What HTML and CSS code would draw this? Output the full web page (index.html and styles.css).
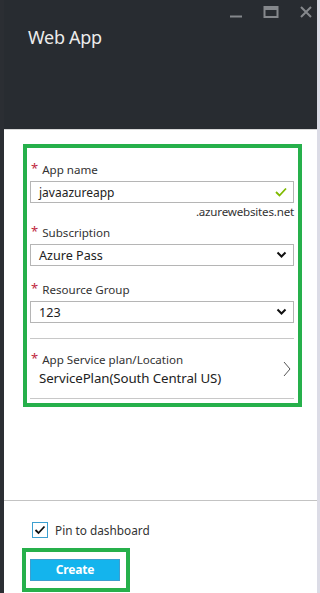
FILE: index.html
```html
<!DOCTYPE html>
<html>
<head>
<meta charset="utf-8">
<link rel="stylesheet" href="styles.css">
</head>
<body>
<div class="blade">
  <header class="head">
    <h1 class="title">Web App</h1>
    <div class="controls">
      <svg class="ctl" width="14" height="14" viewBox="0 0 14 14"><path d="M1 11.5h12" stroke="#85888c" stroke-width="2"/></svg>
      <svg class="ctl" width="16" height="14" viewBox="0 0 16 14"><rect x="1.5" y="2" width="13" height="10" fill="none" stroke="#85888c" stroke-width="2"/><path d="M1.5 4h13" stroke="#85888c" stroke-width="2"/></svg>
      <svg class="ctl" width="14" height="14" viewBox="0 0 14 14"><path d="M2 2l10 10M12 2L2 12" stroke="#85888c" stroke-width="2"/></svg>
    </div>
  </header>
  <main class="content">
    <section class="form-box">
      <label class="lbl"><span class="req">*</span>App name</label>
      <div class="field">
        <span>javaazureapp</span>
        <svg width="12" height="10" viewBox="0 0 12 10"><path d="M1 5l3.5 3.5L11 1.5" fill="none" stroke="#7fba00" stroke-width="1.8"/></svg>
      </div>
      <div class="suffix">.azurewebsites.net</div>
      <label class="lbl lbl-2"><span class="req">*</span>Subscription</label>
      <div class="field select">
        <span>Azure Pass</span>
        <svg width="11" height="8" viewBox="0 0 11 8"><path d="M1.5 1.5l4 4 4-4" fill="none" stroke="#111" stroke-width="2"/></svg>
      </div>
      <label class="lbl lbl-3"><span class="req">*</span>Resource Group</label>
      <div class="field select">
        <span>123</span>
        <svg width="11" height="8" viewBox="0 0 11 8"><path d="M1.5 1.5l4 4 4-4" fill="none" stroke="#111" stroke-width="2"/></svg>
      </div>
      <div class="plan">
        <div class="plan-text">
          <label class="lbl"><span class="req">*</span>App Service plan/Location</label>
          <div class="plan-val">ServicePlan(South Central US)</div>
        </div>
        <svg width="8" height="16" viewBox="0 0 8 16"><path d="M1 1l6 7-6 7" fill="none" stroke="#555" stroke-width="1"/></svg>
      </div>
    </section>
    <footer class="foot">
      <div class="pin">
        <span class="cb"><svg width="12" height="10" viewBox="0 0 12 10"><path d="M1.5 5l3 3L10.5 1.5" fill="none" stroke="#111" stroke-width="1.8"/></svg></span>
        <span>Pin to dashboard</span>
      </div>
      <div class="create-box">
        <button class="create">Create</button>
      </div>
    </footer>
  </main>
</div>
</body>
</html>
```
FILE: styles.css
```css
* { box-sizing: border-box; }
html, body { margin: 0; padding: 0; }
body { width: 320px; height: 593px; overflow: hidden; font-family: "Noto Sans", "Open Sans", sans-serif; background: #fff; }
.blade { width: 320px; height: 593px; display: flex; flex-direction: column; border-left: 4px solid #2b2e33; border-right: 3px solid #dcdce6; }
.head { height: 130px; background: #282c31; position: relative; border-bottom: 1px solid #d8d8d8; flex: none; }
.title { margin: 0; padding: 25px 0 0 24px; color: #ececec; font-weight: 400; font-size: 18px; line-height: 24px; letter-spacing: -0.3px; }
.controls { position: absolute; top: 5px; right: 4px; display: flex; gap: 20px; align-items: center; }
.content { flex: 1; display: flex; flex-direction: column; }
.form-box { margin: 14px 15px 0 19px; border: 4px solid #26b04b; padding: 13px 4px 3px 3px; height: 263px; }
.lbl { display: block; font-size: 11.6px; line-height: 16px; color: #333; height: 16px; padding-left: 1px; }
.req { color: #c0283e; font-size: 13px; margin-right: 4px; position: relative; top: -1px; }
.field { margin-top: 4px; height: 22px; border: 1px solid #b5b5b5; display: flex; align-items: center; justify-content: space-between; padding: 0 6px 0 8px; font-size: 12px; color: #222; }
.select { font-size: 12.6px; }
.suffix { text-align: right; font-size: 11.6px; line-height: 16px; color: #333; margin-top: 1px; letter-spacing: -0.2px; }
.lbl-2 { margin-top: 4px; }
.lbl-3 { margin-top: 15px; }
.plan { margin-top: 15px; border-top: 1px solid #c8c8c8; border-bottom: 1px solid #c8c8c8; height: 61px; display: flex; align-items: center; justify-content: space-between; padding: 0 3px 0 0; }
.plan-text { padding-top: 1px; }
.plan-val { font-size: 13.3px; line-height: 19px; color: #222; padding-left: 9px; margin-top: 2px; letter-spacing: -0.1px; }
.foot { margin-top: 93px; border-top: 1px solid #c3c3c3; padding: 21px 0 0 18px; flex: 1; }
.pin { display: flex; align-items: center; gap: 7px; font-size: 11.8px; color: #333; margin-left: 10px; }
.cb { width: 16px; height: 16px; border: 1px solid #3c9fd0; display: flex; align-items: center; justify-content: center; }
.create-box { margin-top: 10px; width: 108px; height: 44px; border: 4px solid #26b04b; padding: 5px 6px 0 4px; }
.create { width: 90px; height: 22px; background: #14b4ed; border: 1px solid #3c9fd0; color: #fff; font-family: inherit; font-weight: 700; font-size: 12px; padding: 0; letter-spacing: -0.2px; }
```
